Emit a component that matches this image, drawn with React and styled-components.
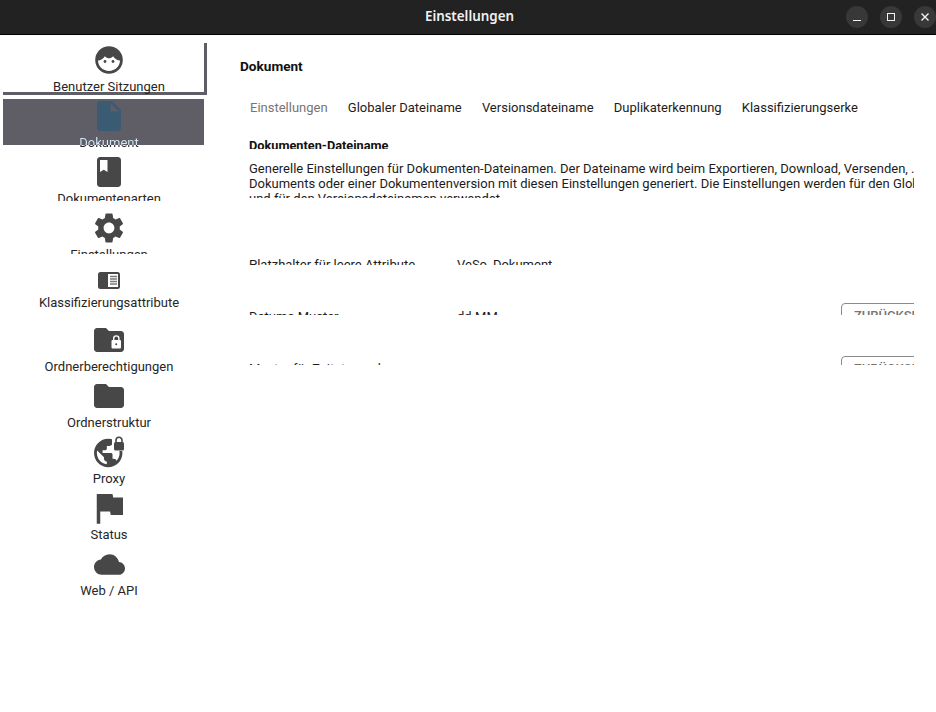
import React from "react";
import styled, { createGlobalStyle } from "styled-components";

const GlobalStyle = createGlobalStyle`
  html, body {
    margin: 0;
    height: 100%;
    background: #ffffff;
    overflow: hidden;
  }
  body {
    font-family: Roboto, "Liberation Sans", sans-serif;
    font-size: 13px;
    color: #1c1c1c;
  }
`;

const Window = styled.div`
  display: flex;
  flex-direction: column;
  width: 936px;
  height: 712px;
`;

const TitleBar = styled.header`
  display: grid;
  grid-template-columns: 1fr auto 1fr;
  align-items: center;
  height: 34px;
  background: #222222;
  border-bottom: 1px solid #000000;
  color: #f1f1f1;
`;

const WindowTitle = styled.div`
  grid-column: 2;
  margin: 0 0 3px 3px;
  font-family: "Noto Sans", sans-serif;
  font-size: 13.4px;
  font-weight: 600;
`;

const WindowControls = styled.div`
  display: flex;
  justify-content: flex-end;
  gap: 12px;
`;

const WindowButton = styled.div`
  display: flex;
  align-items: center;
  justify-content: center;
  width: 22px;
  height: 22px;
  border-radius: 50%;
  background: #383838;
`;

const Body = styled.div`
  display: flex;
  flex: 1;
  min-height: 0;
`;

const Sidebar = styled.nav`
  display: flex;
  flex-direction: column;
  width: 212px;
  padding: 8px 0 0 3px;
  flex-shrink: 0;
`;

const NavRow = styled.div`
  position: relative;
  height: 56px;
  flex-shrink: 0;

  &::before {
    content: "";
    display: ${(p) => (p.$state ? "block" : "none")};
    position: absolute;
    top: 0;
    left: 0;
    box-sizing: border-box;
    width: ${(p) => (p.$state === "active" ? "201px" : "204px")};
    height: ${(p) => (p.$state === "active" ? "46px" : "52px")};
    background: ${(p) => (p.$state === "active" ? "#5f5d66" : "transparent")};
    border-right: ${(p) => (p.$state === "hover" ? "3px solid #5f5d66" : "none")};
    border-bottom: ${(p) => (p.$state === "hover" ? "3px solid #5f5d66" : "none")};
  }
`;

const NavInner = styled.div`
  position: relative;
  display: flex;
  flex-direction: column;
  align-items: center;
  height: ${(p) => (p.$clip ? `${p.$clip}px` : "auto")};
  overflow: ${(p) => (p.$clip ? "hidden" : "visible")};
`;

const NavIcon = styled.div`
  display: flex;
  align-items: center;
  justify-content: center;
  height: ${(p) => (p.$small ? "26px" : "34px")};
  margin-bottom: 1px;
  color: ${(p) => (p.$active ? "#3b5b73" : "#474747")};
`;

const NavLabel = styled.span`
  font-size: 13px;
  line-height: 18px;
  white-space: nowrap;
  color: #262626;
`;

const ActiveLabel = styled(NavLabel)`
  color: transparent;
  background: linear-gradient(#d3e6f5 0 11px, #262626 11px);
  -webkit-background-clip: text;
  background-clip: text;
`;

const Main = styled.main`
  display: flex;
  flex-direction: column;
  flex: 1;
  min-width: 0;
  padding: 22px 22px 0 25px;
`;

const PageTitle = styled.h1`
  margin: 0;
  font-size: 13.6px;
  line-height: 18px;
  font-weight: 700;
  color: #111111;
`;

const Tabs = styled.div`
  display: flex;
  width: 618px;
  margin-top: 24px;
  overflow: hidden;
  white-space: nowrap;
`;

const Tab = styled.div`
  flex-shrink: 0;
  padding: 0 10.15px 0 10px;
  line-height: 18px;
  color: ${(p) => (p.$active ? "#757575" : "#1c1c1c")};
`;

const Section = styled.section`
  display: flex;
  flex-direction: column;
  padding-left: 9px;
  overflow: hidden;
`;

const SectionHeading = styled.h2`
  height: 12px;
  margin: 20px 0 12px;
  overflow: hidden;
  font-size: 12.75px;
  line-height: 18px;
  font-weight: 700;
  color: #111111;
`;

const Description = styled.p`
  height: 37px;
  margin: 0 0 52px;
  overflow: hidden;
  font-size: 13px;
  line-height: 15px;
  white-space: nowrap;
`;

const SettingRow = styled.div`
  height: 53px;
`;

const SettingClip = styled.div`
  display: grid;
  grid-template-columns: 208px 384px 1fr;
  height: ${(p) => p.$clip}px;
  overflow: hidden;
`;

const SettingText = styled.div`
  padding-top: ${(p) => p.$top}px;
  line-height: 15px;
  white-space: nowrap;
`;

const ResetButton = styled.button`
  display: block;
  box-sizing: border-box;
  width: 130px;
  padding: 4px 0 16px 12px;
  background: transparent;
  border: 1px solid #8a8a8a;
  border-radius: 4px;
  font-family: Roboto, sans-serif;
  font-size: 13px;
  font-weight: 500;
  line-height: 15px;
  text-align: left;
  text-transform: uppercase;
  white-space: nowrap;
  color: #757575;
`;

const Icon = ({ d, size = 36 }) => (
  <svg width={size} height={size} viewBox="0 0 24 24" fill="currentColor">
    <path d={d} />
  </svg>
);

const FaceIcon = () => (
  <svg width="28" height="28" viewBox="0 0 28 28">
    <circle cx="14" cy="14" r="13.8" fill="#474747" />
    <path
      d="M3 14.6C5.6 14.4 8.4 12.6 9.8 10.2C11.2 11.6 12.7 12.2 14 12.2C15.3 12.2 16.8 11.6 18.2 10.2C19.6 12.6 22.4 14.4 25 14.6C24.8 20.6 19.9 25 14 25C8.1 25 3.2 20.6 3 14.6Z"
      fill="#ffffff"
    />
    <circle cx="10" cy="15.5" r="1.4" fill="#474747" />
    <circle cx="18" cy="15.5" r="1.4" fill="#474747" />
  </svg>
);

const AttributeIcon = () => (
  <svg width="22" height="17" viewBox="0 0 22 17">
    <rect width="22" height="17" rx="2.5" fill="#474747" />
    <rect x="10" y="2" width="10" height="13" fill="#ffffff" />
    <path d="M12 4.5h7M12 7h7M12 9.5h7M12 12h7" stroke="#7a7a7a" strokeWidth="1.3" />
  </svg>
);

const LockedFolderIcon = () => (
  <svg width="36" height="36" viewBox="0 0 36 36">
    <path
      fill="#474747"
      d="M15 6H6C4.35 6 3.02 7.35 3.02 9L3 27c0 1.65 1.35 3 3 3h24c1.65 0 3-1.35 3-3V12c0-1.65-1.35-3-3-3H18l-3-3z"
    />
    <rect x="20.5" y="18" width="9.5" height="8.5" rx="1" fill="#ffffff" />
    <path d="M22.7 18.5v-2a2.6 2.6 0 0 1 5.2 0v2" fill="none" stroke="#ffffff" strokeWidth="1.4" />
    <circle cx="25.2" cy="22.2" r="1" fill="#474747" />
  </svg>
);

const ProxyIcon = () => (
  <svg width="36" height="36" viewBox="0 0 36 36">
    <g transform="translate(0.2 2) scale(1.42)">
      <path
        fill="#474747"
        d="M12 2C6.48 2 2 6.48 2 12s4.48 10 10 10 10-4.48 10-10S17.52 2 12 2zm-1 17.93c-3.95-.49-7-3.85-7-7.93 0-.62.08-1.21.21-1.79L9 15v1c0 1.1.9 2 2 2v1.93zm6.9-2.54c-.26-.81-1-1.39-1.9-1.39h-1v-3c0-.55-.45-1-1-1H8v-2h2c.55 0 1-.45 1-1V7h2c1.1 0 2-.9 2-2v-.41c2.93 1.19 5 4.06 5 7.41 0 2.08-.8 3.97-2.1 5.39z"
      />
    </g>
    <rect x="21" y="2" width="13" height="15" fill="#ffffff" />
    <rect x="23" y="8" width="10" height="8.5" rx="1.5" fill="#474747" />
    <path d="M25 8.5V6.2a3 3 0 0 1 6 0v2.3" fill="none" stroke="#474747" strokeWidth="1.6" />
  </svg>
);

const CloudIcon = () => (
  <svg width="31" height="31" viewBox="0 0 24 24" fill="#474747">
    <path d="M19.35 10.04C18.67 6.59 15.64 4 12 4 9.11 4 6.6 5.64 5.35 8.04 2.34 8.36 0 10.91 0 14c0 3.31 2.69 6 6 6h13c2.76 0 5-2.24 5-5 0-2.64-2.05-4.78-4.65-4.96z" />
  </svg>
);

const paths = {
  doc: "M6 2c-1.1 0-2 .9-2 2v16c0 1.1.9 2 2 2h12c1.1 0 2-.9 2-2V8l-6-6H6zm7 7V3.5L18.5 9H13z",
  book: "M18 2H6c-1.1 0-2 .9-2 2v16c0 1.1.9 2 2 2h12c1.1 0 2-.9 2-2V4c0-1.1-.9-2-2-2zM6 4h5v8l-2.5-1.5L6 12V4z",
  gear: "M19.14 12.94c.04-.3.06-.61.06-.94 0-.32-.02-.64-.07-.94l2.03-1.58c.18-.14.23-.41.12-.61l-1.92-3.32c-.12-.22-.37-.29-.59-.22l-2.39.96c-.5-.38-1.03-.7-1.62-.94l-.36-2.54c-.04-.24-.24-.41-.48-.41h-3.84c-.24 0-.43.17-.47.41l-.36 2.54c-.59.24-1.13.57-1.62.94l-2.39-.96c-.22-.08-.47 0-.59.22L2.74 8.87c-.12.21-.08.47.12.61l2.03 1.58c-.05.3-.09.63-.09.94s.02.64.07.94l-2.03 1.58c-.18.14-.23.41-.12.61l1.92 3.32c.12.22.37.29.59.22l2.39-.96c.5.38 1.03.7 1.62.94l.36 2.54c.05.24.24.41.48.41h3.84c.24 0 .44-.17.47-.41l.36-2.54c.59-.24 1.13-.56 1.62-.94l2.39.96c.22.08.47 0 .59-.22l1.92-3.32c.12-.22.07-.47-.12-.61l-2.01-1.58zM12 15.6c-1.98 0-3.6-1.62-3.6-3.6s1.62-3.6 3.6-3.6 3.6 1.62 3.6 3.6-1.62 3.6-3.6 3.6z",
  folder: "M10 4H4c-1.1 0-1.99.9-1.99 2L2 18c0 1.1.9 2 2 2h16c1.1 0 2-.9 2-2V8c0-1.1-.9-2-2-2h-8l-2-2z",
  flag: "M14.4 6L14 4H5v17h2v-7h5.6l.4 2h7V6z",
};

const navItems = [
  { label: "Benutzer Sitzungen", icon: <FaceIcon />, state: "hover" },
  { label: "Dokument", icon: <Icon d={paths.doc} />, state: "active" },
  { label: "Dokumentenarten", icon: <Icon d={paths.book} />, clip: 46 },
  { label: "Einstellungen", icon: <Icon d={paths.gear} />, clip: 43 },
  { label: "Klassifizierungsattribute", icon: <AttributeIcon />, small: true },
  { label: "Ordnerberechtigungen", icon: <LockedFolderIcon /> },
  { label: "Ordnerstruktur", icon: <Icon d={paths.folder} /> },
  { label: "Proxy", icon: <ProxyIcon /> },
  { label: "Status", icon: <Icon d={paths.flag} size={42} /> },
  { label: "Web / API", icon: <CloudIcon /> },
];

const tabs = [
  "Einstellungen",
  "Globaler Dateiname",
  "Versionsdateiname",
  "Duplikaterkennung",
  "Klassifizierungserkennung",
];

const settings = [
  { label: "Platzhalter für leere Attribute", value: "VeSo_Dokument", clip: 15, top: 7 },
  { label: "Datums-Muster", value: "dd.MM", clip: 12, top: 6, reset: true },
  { label: "Muster für Zeitstempel", value: "", clip: 9, top: 5, reset: true },
];

export default function App() {
  return (
    <Window>
      <GlobalStyle />
      <TitleBar>
        <WindowTitle>Einstellungen</WindowTitle>
        <WindowControls>
          <WindowButton>
            <svg width="10" height="10" viewBox="0 0 10 10">
              <path d="M1 8.5h8" stroke="#f1f1f1" strokeWidth="1" />
            </svg>
          </WindowButton>
          <WindowButton>
            <svg width="10" height="10" viewBox="0 0 10 10">
              <rect x="1.5" y="1.5" width="7" height="7" fill="none" stroke="#f1f1f1" strokeWidth="1" />
            </svg>
          </WindowButton>
          <WindowButton>
            <svg width="10" height="10" viewBox="0 0 10 10">
              <path d="M1.5 1.5l7 7M8.5 1.5l-7 7" stroke="#f1f1f1" strokeWidth="1.4" />
            </svg>
          </WindowButton>
        </WindowControls>
      </TitleBar>
      <Body>
        <Sidebar>
          {navItems.map((item) => (
            <NavRow key={item.label} $state={item.state}>
              <NavInner $clip={item.clip}>
                <NavIcon $small={item.small} $active={item.state === "active"}>
                  {item.icon}
                </NavIcon>
                {item.state === "active" ? (
                  <ActiveLabel>{item.label}</ActiveLabel>
                ) : (
                  <NavLabel>{item.label}</NavLabel>
                )}
              </NavInner>
            </NavRow>
          ))}
        </Sidebar>
        <Main>
          <PageTitle>Dokument</PageTitle>
          <Tabs>
            {tabs.map((tab, i) => (
              <Tab key={tab} $active={i === 0}>
                {tab}
              </Tab>
            ))}
          </Tabs>
          <Section>
            <SectionHeading>Dokumenten-Dateiname</SectionHeading>
            <Description>
              Generelle Einstellungen für Dokumenten-Dateinamen. Der Dateiname wird beim Exportieren, Download, Versenden, ...
              <br />
              Dokuments oder einer Dokumentenversion mit diesen Einstellungen generiert. Die Einstellungen werden für den Globalen Dateinamen
              <br />
              und für den Versionsdateinamen verwendet.
            </Description>
            {settings.map((row) => (
              <SettingRow key={row.label}>
                <SettingClip $clip={row.clip}>
                  <SettingText $top={row.top}>{row.label}</SettingText>
                  <SettingText $top={row.top}>{row.value}</SettingText>
                  {row.reset && <ResetButton>Zurücksetzen</ResetButton>}
                </SettingClip>
              </SettingRow>
            ))}
          </Section>
        </Main>
      </Body>
    </Window>
  );
}
